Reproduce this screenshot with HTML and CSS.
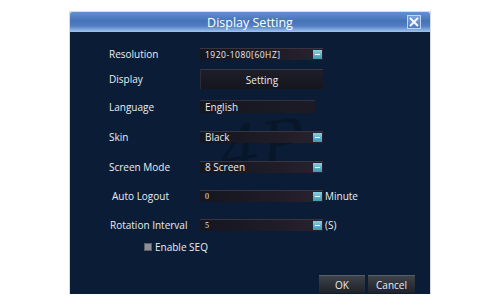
FILE: index.html
```html
<!DOCTYPE html>
<html>
<head>
<meta charset="utf-8">
<link rel="stylesheet" href="styles.css">
</head>
<body>
<div class="dialog">
  <div class="titlebar">
    <span class="title">Display Setting</span>
    <span class="close"><svg width="10" height="10" viewBox="0 0 10 10"><path d="M1 1L9 9M9 1L1 9" stroke="#fff" stroke-width="1.8"/></svg></span>
  </div>
  <div class="body">
    <div class="watermark">4P</div>
    <div class="row r1">
      <span class="label">Resolution</span>
      <div class="select wide"><span class="val small">1920-1080[60HZ]</span><span class="drop"></span></div>
    </div>
    <div class="row r2">
      <span class="label">Display</span>
      <div class="btnbox">Setting</div>
    </div>
    <div class="row r3">
      <span class="label">Language</span>
      <div class="field">English</div>
    </div>
    <div class="row r4">
      <span class="label">Skin</span>
      <div class="select wide"><span class="val">Black</span><span class="drop"></span></div>
    </div>
    <div class="row r5">
      <span class="label">Screen Mode</span>
      <div class="select wide"><span class="val">8 Screen</span><span class="drop"></span></div>
    </div>
    <div class="row r6">
      <span class="label shift3">Auto Logout</span>
      <div class="select wide"><span class="val num">0</span><span class="drop"></span></div>
      <span class="unit">Minute</span>
    </div>
    <div class="row r7">
      <span class="label shift1">Rotation Interval</span>
      <div class="select wide"><span class="val num">5</span><span class="drop"></span></div>
      <span class="unit">(S)</span>
    </div>
    <div class="row r8">
      <span class="check"></span><span class="checktext">Enable SEQ</span>
    </div>
    <div class="buttons">
      <div class="btn ok">OK</div>
      <div class="btn cancel">Cancel</div>
    </div>
  </div>
</div>
</body>
</html>
```
FILE: styles.css
```css
html, body {
  margin: 0;
  padding: 0;
  background: #ffffff;
}
body {
  font-family: "Open Sans", "Noto Sans", sans-serif;
  color: #e9edf2;
}
.dialog {
  margin-left: 70px;
  margin-top: 12px;
  width: 360px;
  height: 282px;
  display: flex;
  flex-direction: column;
  box-shadow: 0 0 0 1px #d9dde3;
}
.titlebar {
  height: 20px;
  position: relative;
  display: flex;
  align-items: center;
  justify-content: center;
  background: linear-gradient(#6390d0 0%, #4673b8 45%, #527fc2 70%, #8cb2e6 92%, #a2c4ef 100%);
  border-radius: 2px 2px 0 0;
}
.title {
  font-size: 12.5px;
  color: #ffffff;
}
.close {
  position: absolute;
  right: 9px;
  top: 3px;
  width: 12px;
  height: 12px;
  border: 1px solid #c0d6f2;
  background: linear-gradient(#79a2dc, #4f7dc2);
  display: flex;
  align-items: center;
  justify-content: center;
}
.body {
  flex: 1;
  position: relative;
  background: #0b1d36;
  padding-top: 15px;
  padding-left: 39px;
  display: flex;
  flex-direction: column;
}
.watermark {
  position: absolute;
  left: 150px;
  top: 78px;
  font-family: "DejaVu Serif", serif;
  font-style: italic;
  font-size: 64px;
  color: rgba(0, 0, 0, 0.22);
  transform: rotate(-8deg);
  pointer-events: none;
}
.row {
  position: relative;
  display: flex;
  align-items: center;
  height: 13px;
  font-size: 10px;
}
.r1 { margin-top: 0; }
.r2 { margin-top: 9px; height: 20px; }
.r3 { margin-top: 11px; }
.r4 { margin-top: 17px; }
.r5 { margin-top: 17px; }
.r6 { margin-top: 16px; }
.r7 { margin-top: 16px; }
.r8 { margin-top: 10px; height: 12px; padding-left: 35px; }
.label {
  width: 91px;
  flex: none;
}
.shift3 { padding-left: 3px; width: 88px; }
.shift1 { padding-left: 1px; width: 90px; }
.select {
  position: relative;
  height: 12px;
  display: flex;
  align-items: center;
  justify-content: space-between;
  background: linear-gradient(90deg, #141620 0%, #1f1c26 60%, #2a2230 100%);
  border-top: 1px solid #3a3440;
  box-sizing: border-box;
}
.wide { width: 123px; }
.val {
  padding-left: 5px;
  font-size: 10px;
  line-height: 11px;
}
.val.small {
  font-size: 8.5px;
  letter-spacing: 0.5px;
}
.val.num {
  font-family: "Liberation Serif", serif;
  font-size: 8px;
}
.drop {
  width: 9px;
  height: 9px;
  margin-right: 1px;
  background: linear-gradient(#8ccfe0, #3d98b8);
  position: relative;
}
.drop::after {
  content: "";
  position: absolute;
  left: 2px;
  top: 4px;
  width: 5px;
  height: 1px;
  background: #ffffff;
}
.unit {
  margin-left: 2px;
  font-size: 10px;
}
.btnbox {
  width: 123px;
  height: 20px;
  box-sizing: border-box;
  background: linear-gradient(#1e1e28, #14151d);
  border-top: 1px solid #3a3a46;
  border-left: 1px solid #2c2c36;
  display: flex;
  align-items: center;
  justify-content: center;
  font-size: 10px;
}
.field {
  width: 115px;
  height: 13px;
  box-sizing: border-box;
  background: linear-gradient(90deg, #15161f, #1d1c26);
  border-top: 1px solid #34323e;
  padding-left: 5px;
  display: flex;
  align-items: center;
  font-size: 10px;
}
.check {
  width: 6px;
  height: 6px;
  background: #8e9198;
  border: 1px solid #5c5f66;
  margin-right: 3px;
}
.checktext {
  font-size: 10px;
}
.buttons {
  margin-top: 22px;
  display: flex;
  justify-content: flex-end;
  gap: 3px;
  padding-right: 15px;
}
.btn {
  height: 18px;
  display: flex;
  align-items: center;
  justify-content: center;
  font-size: 10px;
  background: linear-gradient(#3e434b, #2a2e35 60%, #1f2329);
  border-top: 1px solid #5a5e66;
  box-sizing: border-box;
}
.ok { width: 46px; }
.cancel { width: 47px; }
```
